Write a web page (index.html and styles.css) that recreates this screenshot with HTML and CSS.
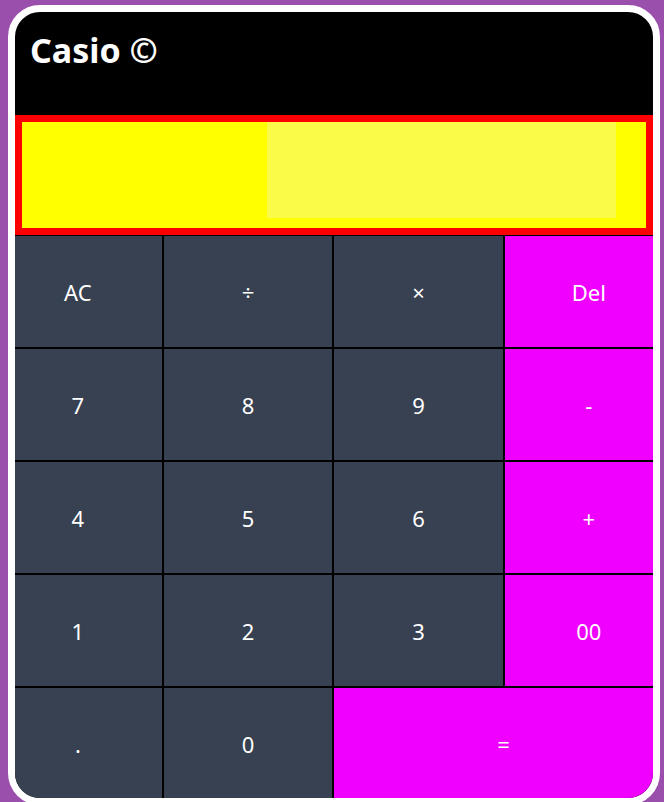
FILE: index.html
```html
<!DOCTYPE html>
<html lang="en">
<head>
<meta charset="utf-8">
<title>Casio</title>
<link rel="stylesheet" href="styles.css">
</head>
<body>
<div class="calc">
  <header class="calc-header">
    <h1 class="brand">Casio ©</h1>
  </header>
  <div class="display">
    <input class="display-input" type="text" value="">
  </div>
  <div class="keys-wrap">
    <div class="keys">
      <button class="key">AC</button>
      <button class="key">÷</button>
      <button class="key">×</button>
      <button class="key key-op">Del</button>
      <button class="key">7</button>
      <button class="key">8</button>
      <button class="key">9</button>
      <button class="key key-op">-</button>
      <button class="key">4</button>
      <button class="key">5</button>
      <button class="key">6</button>
      <button class="key key-op">+</button>
      <button class="key">1</button>
      <button class="key">2</button>
      <button class="key">3</button>
      <button class="key key-op">00</button>
      <button class="key">.</button>
      <button class="key">0</button>
      <button class="key key-op key-wide">=</button>
    </div>
  </div>
</div>
</body>
</html>
```

FILE: styles.css
```css
html, body {
  margin: 0;
  padding: 0;
  overflow: hidden;
}

body {
  background: #9b4fac;
  font-family: "Noto Sans", "Open Sans", sans-serif;
  padding: 5px 4px 0 8px;
}

.calc {
  box-sizing: border-box;
  width: 652px;
  height: 800px;
  border: 7px solid #ffffff;
  border-radius: 32px;
  overflow: hidden;
  background: #000;
  display: flex;
  flex-direction: column;
}

.calc-header {
  height: 103px;
  flex: none;
  padding: 0 15px;
  box-sizing: border-box;
}

.brand {
  margin: 0;
  padding-top: 15px;
  color: #fff;
  font-size: 34px;
  font-weight: 700;
  line-height: 46px;
}

.display {
  flex: none;
  height: 120px;
  box-sizing: border-box;
  border: 7px solid #ff0000;
  background: #ffff00;
  display: flex;
  align-items: flex-start;
}

.display-input {
  margin: 0 0 0 245px;
  width: 349px;
  height: 96px;
  box-sizing: border-box;
  border: none;
  outline: none;
  padding: 0;
  background: #fafa48;
}

.keys-wrap {
  flex: 1;
  overflow: hidden;
}

.keys {
  margin-left: -22.33px;
  width: 681.33px;
  display: grid;
  grid-template-columns: repeat(4, 1fr);
  grid-auto-rows: 113px;
}

.key {
  box-sizing: border-box;
  border: 1px solid #000;
  background: #374151;
  color: #fff;
  font-family: "Noto Sans", "Open Sans", sans-serif;
  font-size: 22px;
  padding: 0;
  margin: 0;
}

.key-op {
  background: #f000ff;
}

.key-wide {
  grid-column: span 2;
}
```
